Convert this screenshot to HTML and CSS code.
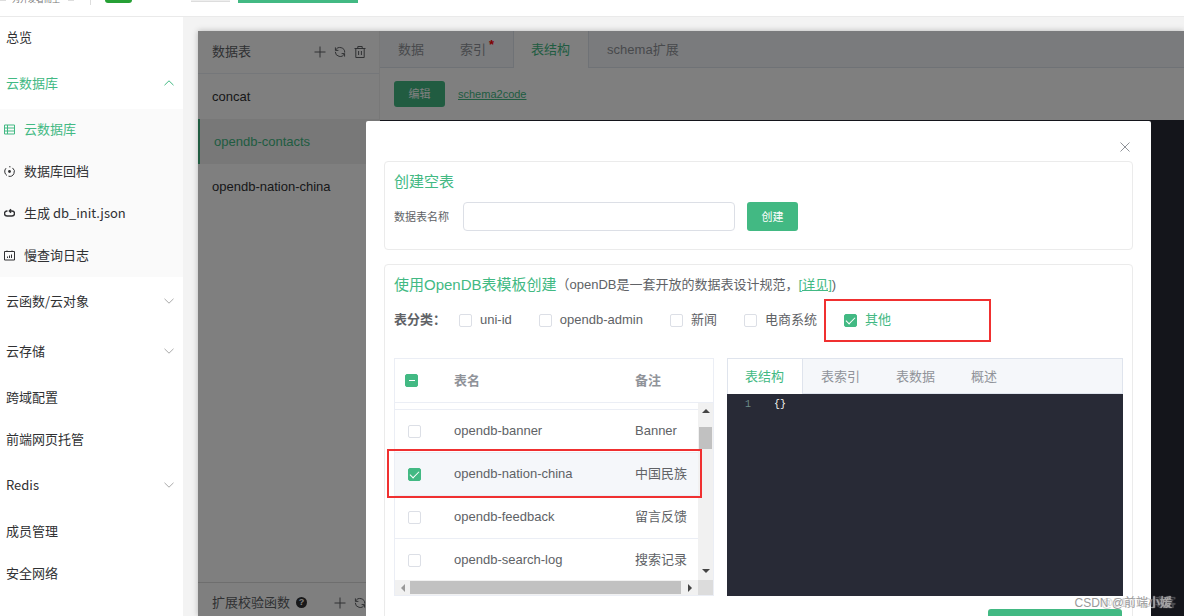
FILE: index.html
```html
<!DOCTYPE html>
<html lang="zh-CN">
<head>
<meta charset="utf-8">
<title>云数据库</title>
<link rel="stylesheet" href="styles.css">
</head>
<body>
<svg class="sprite" aria-hidden="true">
  <symbol id="plus" viewBox="0 0 14 14"><path d="M7 1.5v11M1.5 7h11"/></symbol>
  <symbol id="refresh" viewBox="0 0 14 14"><path d="M2.4 2.400v3h3M2.600 5.200A4.800 4.800 0 0 1 11.700 7.600M11.600 11.600v-3h-3M11.400 8.800A4.800 4.800 0 0 1 2.300 6.800"/></symbol>
  <symbol id="trash" viewBox="0 0 14 14"><path d="M1.5 3.5h11M4.8 3.5v-2h4.4v2M2.8 3.5v9h8.4v-9M5.6 6v4M8.4 6v4"/></symbol>
  <symbol id="down" viewBox="0 0 12 12"><path d="M1.500 3.800L6 8.200l4.500-4.400"/></symbol>
  <symbol id="up" viewBox="0 0 12 12"><path d="M1.5 8.2L6 3.8l4.500 4.400"/></symbol>
</svg>
<header class="topbar">
  <i class="dash"></i><span class="slogan">为开发者而生</span><i class="dash"></i>
  <i class="divider"></i>
  <i class="badge-green"></i><i class="badge-grey"></i><i class="badge-wide"></i>
</header>
<div class="layout">
  <nav class="sidebar">
    <a class="item" href="#">总览</a>
    <a class="item tall active" href="#">云数据库<svg class="icon arrow"><use href="#up"/></svg></a>
    <div class="submenu">
      <a class="item active" href="#"><svg class="icon mini" viewBox="0 0 11 11"><path d="M.5 1h10v9H.5zM.5 4h10M.5 7h10M3.500 1v9"/></svg>云数据库</a>
      <a class="item" href="#"><svg class="icon mini" viewBox="0 0 11 11"><path d="M2 2.200A4.700 4.700 0 0 0 3 9.500M4.500 10.200A4.700 4.700 0 0 0 8.500 1.900M6.500.8A4.700 4.700 0 0 0 5 .8"/><circle class="dot" cx="5.500" cy="5.500" r="1.400"/></svg>数据库回档</a>
      <a class="item" href="#"><svg class="icon mini" viewBox="0 0 11 11"><path class="bold" d="M3.500 3H3a2.500 2.500 0 0 0 0 5h5a2.500 2.500 0 0 0 0-5H5.500M7 1.200L5.300 3 7 4.800"/></svg>生成 db_init.json</a>
      <a class="item" href="#"><svg class="icon mini" viewBox="0 0 11 11"><path d="M.5 1.500h10v8.500H.5zM3.500 8V6.500M5.500 8V5.500M7.500 8V4.500M3 .5v1M8 .5v1"/></svg>慢查询日志</a>
    </div>
    <a class="item tall" href="#">云函数/云对象<svg class="icon arrow"><use href="#down"/></svg></a>
    <a class="item tall" href="#">云存储<svg class="icon arrow"><use href="#down"/></svg></a>
    <a class="item" href="#">跨域配置</a>
    <a class="item" href="#">前端网页托管</a>
    <a class="item tall" href="#">Redis<svg class="icon arrow"><use href="#down"/></svg></a>
    <a class="item" href="#">成员管理</a>
    <a class="item" href="#">安全网络</a>
  </nav>
  <main class="content">
    <div class="panel">
      <aside class="tables">
        <div class="tables-head">
          <span>数据表</span>
          <button class="tool" aria-label="新建"><svg class="icon"><use href="#plus"/></svg></button>
          <button class="tool" aria-label="刷新"><svg class="icon"><use href="#refresh"/></svg></button>
          <button class="tool" aria-label="删除"><svg class="icon"><use href="#trash"/></svg></button>
        </div>
        <a class="table-link" href="#">concat</a>
        <a class="table-link current" href="#">opendb-contacts</a>
        <a class="table-link" href="#">opendb-nation-china</a>
        <div class="tables-foot">
          <span>扩展校验函数</span><b class="help">?</b>
          <button class="tool" aria-label="新建函数"><svg class="icon"><use href="#plus"/></svg></button>
          <button class="tool" aria-label="刷新函数"><svg class="icon"><use href="#refresh"/></svg></button>
        </div>
      </aside>
      <section class="workspace">
        <div class="tabs">
          <button class="tab">数据</button>
          <button class="tab">索引<sup class="star">*</sup></button>
          <button class="tab on">表结构</button>
          <button class="tab">schema扩展</button>
        </div>
        <div class="toolbar">
          <button class="primary small">编辑</button>
          <a class="code-link" href="#">schema2code</a>
        </div>
        <div class="editor"></div>
      </section>
      <div class="mask">
        <div class="dialog" role="dialog" aria-label="创建表">
          <div class="dialog-head"><button class="close" aria-label="关闭"><svg class="icon" viewBox="0 0 12 12"><path d="M1.500 1.500l9 9M10.500 1.500l-9 9"/></svg></button></div>
          <section class="card">
            <h2 class="title">创建空表</h2>
            <div class="form">
              <label for="table-name">数据表名称</label>
              <input class="text" id="table-name" type="text">
              <button class="primary">创建</button>
            </div>
          </section>
          <section class="card grow">
            <div class="template-head">
              <h2 class="title">使用OpenDB表模板创建</h2>
              <span>（openDB是一套开放的数据表设计规范，<a class="detail" href="#">[详见]</a>)</span>
            </div>
            <div class="filters">
              <b class="filters-name">表分类：</b>
              <label class="option"><input class="check" type="checkbox">uni-id</label>
              <label class="option"><input class="check" type="checkbox">opendb-admin</label>
              <label class="option"><input class="check" type="checkbox">新闻</label>
              <label class="option"><input class="check" type="checkbox">电商系统</label>
              <label class="option chosen"><input class="check" type="checkbox" checked>其他<i class="mark mark-option"></i></label>
            </div>
            <div class="split">
              <div class="list">
                <table class="grid">
                  <thead><tr><th class="col-check head-check"><input class="check partial" type="checkbox" aria-label="全选" checked></th><th class="col-name">表名</th><th>备注</th></tr></thead>
                </table>
                <div class="list-body">
                  <div class="rows">
                    <table class="grid">
                      <tbody>
                        <tr class="tail"><td class="col-check"></td><td class="col-name"></td><td></td></tr>
                        <tr><td class="col-check"><input class="check" type="checkbox" aria-label="opendb-banner"></td><td>opendb-banner</td><td>Banner</td></tr>
                        <tr class="selected"><td><input class="check" type="checkbox" aria-label="opendb-nation-china" checked></td><td>opendb-nation-china</td><td>中国民族</td></tr>
                        <tr><td><input class="check" type="checkbox" aria-label="opendb-feedback"></td><td>opendb-feedback</td><td>留言反馈</td></tr>
                        <tr><td><input class="check" type="checkbox" aria-label="opendb-search-log"></td><td>opendb-search-log</td><td>搜索记录</td></tr>
                      </tbody>
                    </table>
                  </div>
                  <div class="vbar"><i class="tri up"></i><i class="vthumb"></i><i class="tri down"></i></div>
                  <div class="hbar"><i class="tri left"></i><i class="hthumb"></i><i class="tri right"></i></div>
                  <div class="corner"></div>
                </div>
                <i class="mark mark-row"></i>
              </div>
              <div class="preview">
                <div class="tabs preview-tabs">
                  <button class="tab on">表结构</button>
                  <button class="tab">表索引</button>
                  <button class="tab">表数据</button>
                  <button class="tab">概述</button>
                </div>
                <pre class="code"><span class="line-no">1</span>{}</pre>
              </div>
            </div>
            <div class="actions"><button class="primary wide" aria-label="创建所选表"></button></div>
          </section>
        </div>
      </div>
    </div>
  </main>
</div>
<div class="watermark"><span class="ghost">@51CTO博客</span>CSDN @前端小媛</div>
</body>
</html>
```
FILE: styles.css
```css
* { box-sizing: border-box; }
body {
  margin: 0;
  height: 100vh;
  overflow: hidden;
  display: flex;
  flex-direction: column;
  position: relative;
  background: #f3f3f3;
  color: #606266;
  font: 13px/20px "Liberation Sans", "Noto Sans CJK SC", sans-serif;
}
button, input { font: inherit; margin: 0; }
button { border: 0; padding: 0; background: none; color: inherit; }
a { color: inherit; text-decoration: none; }
.sprite { position: absolute; width: 0; height: 0; }
.icon { fill: none; stroke: currentColor; stroke-width: 1; flex: none; display: block; }

.topbar {
  flex: none;
  height: 17px;
  background: #fff;
  border-bottom: 1px solid #eaeaea;
  display: flex;
  align-items: flex-start;
  overflow: hidden;
}
.dash { width: 6px; height: 1px; background: #ddd; }
.slogan { margin: -5px 8px 0 6px; font-size: 8px; line-height: 10px; color: #777; }
.divider { width: 1px; height: 5px; margin: 0 14px 0 16px; background: #ddd; }
.badge-green { width: 27px; height: 3px; border-radius: 0 0 3px 3px; background: #26a035; }
.badge-grey { width: 39px; height: 2px; margin: 0 8px 0 59px; background: #eee; border-bottom: 1px solid #ddd; }
.badge-wide { width: 120px; height: 3px; background: #42b983; }

.layout { flex: 1; min-height: 0; display: flex; }
.sidebar { width: 183px; flex: none; background: #fff; color: #303133; font-family: "Noto Sans CJK SC", sans-serif; }
.item { display: flex; align-items: center; height: 42px; padding: 0 8px 2px 6px; }
.tall { height: 50px; }
.active { color: #42b983; }
.arrow { width: 12px; height: 12px; margin-left: auto; color: #aaa; }
.active .arrow { color: #42b983; }
.submenu { background: #fafafa; }
.submenu .item { padding-left: 4px; gap: 9px; }
.mini { width: 11px; height: 11px; }
.dot { fill: currentColor; stroke: none; }
.bold { stroke-width: 1.4; }

.content { flex: 1; min-width: 0; padding: 14px 0 0 15px; display: flex; }
.panel { flex: 1; min-width: 0; display: flex; position: relative; background: #fff; box-shadow: 0 0 6px rgba(0, 0, 0, .25); }
.tables { width: 182px; flex: none; display: flex; flex-direction: column; border-right: 1px solid #f0f0f0; color: #303133; }
.tables-head, .tables-foot { display: flex; align-items: center; height: 43px; padding: 0 12px 0 14px; gap: 6px; color: #606266; }
.tables-head { border-bottom: 1px solid #ebeef5; }
.tables-head span { flex: 1; }
.tool .icon { width: 14px; height: 14px; }
.table-link { display: flex; align-items: center; height: 45px; padding: 0 14px; }
.current { color: #42b983; background: #f0f0f0; border-left: 2px solid #42b983; }
.tables-foot { margin-top: auto; height: 34px; border-top: 1px solid #dcdcdc; padding-top: 6px; }
.tables-foot span + .help { margin-right: auto; }
.help { width: 11px; height: 11px; border-radius: 50%; background: #303133; color: #fff; font-size: 9px; line-height: 11px; text-align: center; }
.workspace { flex: 1; min-width: 0; display: flex; flex-direction: column; }
.tabs { display: flex; height: 37px; flex: none; background: #f5f7fa; border-bottom: 1px solid #dfe4ed; color: #909399; }
.tab { padding: 2px 18px 0; white-space: nowrap; }
.tab.on { color: #42b983; background: #fff; margin-bottom: -1px; border: solid #dfe4ed; border-width: 0 1px; padding: 0 18px 0 17px; }
.star { color: #f00; font-size: 13px; font-weight: bold; line-height: 0; padding: 0 1px 0 3px; }
.toolbar { height: 52px; padding: 0 14px; display: flex; align-items: center; gap: 13px; }
.primary { width: 51px; height: 29px; border-radius: 3px; background: #42b983; color: #fff; font-size: 11px; }
.small { height: 26px; }
.code-link { font-size: 11px; color: #42b983; text-decoration: underline; }
.editor { flex: 1; background: #282a36; }

.mask { position: absolute; inset: 0; background: rgba(0, 0, 0, .5); padding: 90px 33px 0 168px; display: flex; overflow: hidden; }
.dialog { flex: 1; min-width: 0; display: flex; flex-direction: column; background: #fff; padding: 0 18px; border-radius: 2px 2px 0 0; }
.dialog-head { flex: none; height: 40px; padding: 20px 2px 0; display: flex; justify-content: flex-end; }
.close { width: 12px; height: 12px; color: #909399; }
.card { flex: none; padding: 10px 9px 18px; border: 1px solid #ebebeb; border-radius: 4px; margin-bottom: 14px; }
.grow { margin-bottom: 0; padding-bottom: 0; }
.title { margin: 0; font-size: 15px; line-height: 20px; font-weight: normal; color: #42b983; }
.form { display: flex; align-items: center; margin-top: 10px; font-size: 11px; }
.text { width: 272px; height: 29px; margin: 0 12px 0 14px; border: 1px solid #dcdfe6; border-radius: 4px; }
.template-head { display: flex; }
.detail { color: #42b983; text-decoration: underline; }
.filters { display: flex; align-items: center; height: 20px; margin: 15px 0 28px; gap: 27px; }
.filters-name { width: 38px; white-space: nowrap; }
.option { display: flex; align-items: center; gap: 8px; position: relative; }
.chosen { color: #42b983; }
.check { appearance: none; width: 13px; height: 13px; flex: none; border: 1px solid #dcdfe6; border-radius: 2px; background: #fff; display: grid; place-items: center; }
.check:checked { background: #42b983; border-color: #42b983; }
.check:checked::after { content: ""; width: 8px; height: 4px; border: solid #fff; border-width: 0 0 1px 1px; transform: rotate(-45deg); margin-bottom: 2px; }
.partial:checked::after { width: 6px; height: 1px; border: 0; background: #fff; transform: none; margin: 0; }
.mark { position: absolute; border: 2px solid #f03030; pointer-events: none; }
.mark-option { left: -20px; top: -11px; width: 167px; height: 43px; }
.mark-row { left: -8px; top: 90px; width: 315px; height: 49px; }

.split { display: flex; gap: 13px; align-items: stretch; }
.list { width: 320px; flex: none; position: relative; border: 1px solid #ebeef5; }
.grid { width: 100%; table-layout: fixed; border-collapse: separate; border-spacing: 0; }
th, td { text-align: left; padding: 0; border-bottom: 1px solid #ebeef5; white-space: nowrap; }
th { height: 44px; color: #909399; }
td { height: 43px; }
td .check { margin-left: 13px; }
.head-check .check { margin-left: 10px; }
.col-check { width: 59px; }
.col-name { width: 181px; }
.tail td { height: 7px; }
.selected { background: #f5f7fa; }
.list-body { display: grid; grid-template-columns: 1fr 15px; grid-template-rows: 177px 15px; }
.rows { overflow: hidden; }
.vbar, .hbar { background: #f1f1f1; display: flex; align-items: center; }
.vbar { flex-direction: column; padding: 6px 0 7px; }
.hbar { padding: 0 6px; }
.corner { background: #dcdcdc; }
.vthumb { width: 13px; height: 22px; margin: 14px 0 auto; background: #c1c1c1; }
.hthumb { flex: 1; height: 13px; margin: 0 7px 0 5px; background: #c1c1c1; }
.tri { border: 4px solid transparent; }
.tri.up { border-top: 0; border-bottom-color: #444; }
.tri.down { border-bottom: 0; border-top-color: #444; }
.tri.left { border-left: 0; border-right-color: #999; }
.tri.right { border-right: 0; border-left-color: #444; }

.preview { flex: 1; min-width: 0; display: flex; flex-direction: column; }
.preview-tabs { height: 36px; border: 1px solid #dfe4ed; }
.preview-tabs .on { border-left: 0; }
.code { flex: 1; margin: 0; padding: 1px 18px; background: #282a36; color: #f8f8f2; font: 10px/20px "Liberation Mono", monospace; }
.line-no { display: inline-block; width: 29px; color: #6d8a88; }
.actions { display: flex; justify-content: flex-end; margin-top: 13px; padding-right: 1px; }
.wide { width: 134px; }

.watermark { position: absolute; right: 12px; bottom: 3px; font-size: 12px; color: #999; text-shadow: 0 0 1px #fff; }
.ghost { position: absolute; right: -4px; opacity: .4; }
```
